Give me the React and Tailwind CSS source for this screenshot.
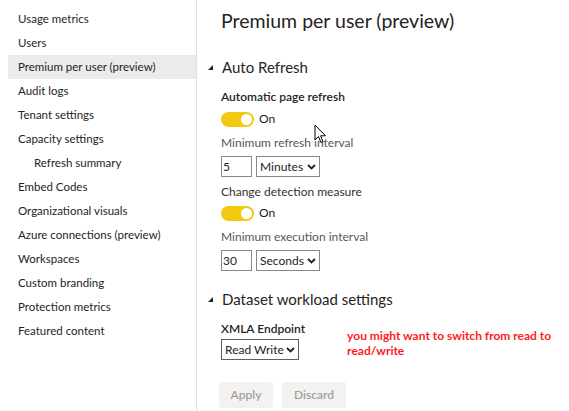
import React from "react";

const navItems = [
  { label: "Usage metrics" },
  { label: "Users" },
  { label: "Premium per user (preview)", active: true },
  { label: "Audit logs" },
  { label: "Tenant settings" },
  { label: "Capacity settings" },
  { label: "Refresh summary", sub: true },
  { label: "Embed Codes" },
  { label: "Organizational visuals" },
  { label: "Azure connections (preview)" },
  { label: "Workspaces" },
  { label: "Custom branding" },
  { label: "Protection metrics" },
  { label: "Featured content" },
];

function Chevron() {
  return (
    <svg width="9" height="6" viewBox="0 0 9 6" className="ml-auto">
      <path d="M1 1 L4.5 4.5 L8 1" fill="none" stroke="#252423" strokeWidth="1.9" />
    </svg>
  );
}

function Caret() {
  return (
    <svg width="5" height="5" viewBox="0 0 5 5" className="mr-[9px]">
      <path d="M5 0 L5 5 L0 5 Z" fill="#252423" />
    </svg>
  );
}

function Toggle() {
  return (
    <div className="flex items-center h-[16px]">
      <div className="w-[33px] h-[15px] rounded-full bg-[#f2c811] flex items-center justify-end pr-[2px]">
        <div className="w-[11px] h-[11px] rounded-full bg-white" />
      </div>
      <span className="ml-[5px] text-[12px] text-[#252423]">On</span>
    </div>
  );
}

function NumSelect({ num, unit }) {
  return (
    <div className="flex gap-[4px] h-[21px]">
      <div className="w-[31px] border border-[#8a8886] flex items-center pl-[1px] text-[12px] text-[#252423]">
        {num}
      </div>
      <div className="w-[64px] border border-[#8a8886] flex items-center pl-[3px] pr-[3px] text-[12px] text-[#252423]">
        {unit}
        <Chevron />
      </div>
    </div>
  );
}

export default function App() {
  return (
    <div
      className="w-[569px] h-[411px] bg-white flex overflow-hidden relative"
      style={{ fontFamily: "Lato, 'Noto Sans', sans-serif" }}
    >
      <div className="w-[197px] shrink-0 border-r border-[#e1dfdd] pt-[7px]">
        {navItems.map((it) => (
          <div
            key={it.label}
            className={`ml-[8px] h-[24px] flex items-center text-[11.5px] text-[#252423] ${
              it.sub ? "pl-[26px]" : "pl-[10px]"
            } ${it.active ? "bg-[#ebebeb]" : ""}`}
          >
            {it.label}
          </div>
        ))}
      </div>

      <div className="flex-1 pl-[24px] pt-[8px]">
        <div className="text-[19.5px] leading-[26px] text-[#252423]">Premium per user (preview)</div>

        <div className="flex items-center -ml-[13px] mt-[22px] h-[22px]">
          <Caret />
          <span className="text-[15px] text-[#252423]">Auto Refresh</span>
        </div>

        <div className="mt-[11px] text-[12px] leading-[16px] font-semibold text-[#252423]">
          Automatic page refresh
        </div>
        <div className="mt-[6px]">
          <Toggle />
        </div>
        <div className="mt-[8px] text-[12px] leading-[16px] text-[#535760]">Minimum refresh interval</div>
        <div className="mt-[5px]">
          <NumSelect num="5" unit="Minutes" />
        </div>
        <div className="mt-[7px] text-[12px] leading-[16px] text-[#323130]">Change detection measure</div>
        <div className="mt-[5px]">
          <Toggle />
        </div>
        <div className="mt-[8px] text-[12px] leading-[16px] text-[#535760]">Minimum execution interval</div>
        <div className="mt-[5px]">
          <NumSelect num="30" unit="Seconds" />
        </div>

        <div className="flex items-center -ml-[13px] mt-[17px] h-[22px]">
          <Caret />
          <span className="text-[15px] text-[#252423]">Dataset workload settings</span>
        </div>

        <div className="flex mt-[11px]">
          <div>
            <div className="text-[12px] leading-[16px] font-semibold text-[#252423]">XMLA Endpoint</div>
            <div className="mt-[2px] w-[78px] h-[21px] border border-[#605e5c] flex items-center pl-[3px] pr-[3px] text-[12px] text-[#252423]">
              Read Write
              <Chevron />
            </div>
          </div>
          <div className="ml-[42px] mt-[7px] text-[12px] leading-[15px] font-bold text-[#ff1a1a]">
            you might want to switch from read to
            <br />
            read/write
          </div>
        </div>

        <div className="flex gap-[9px] mt-[22px] -ml-[2px]">
          <div className="w-[54px] h-[26px] bg-[#f3f2f1] rounded-[2px] flex items-center justify-center text-[12px] font-semibold text-[#a19f9d]">
            Apply
          </div>
          <div className="w-[64px] h-[26px] bg-[#f3f2f1] rounded-[2px] flex items-center justify-center text-[12px] font-semibold text-[#a19f9d]">
            Discard
          </div>
        </div>
      </div>

      <svg
        className="absolute left-[314px] top-[124px]"
        width="13"
        height="20"
        viewBox="0 0 13 20"
      >
        <path
          d="M1 1 L1 16 L4.5 12.5 L7 18.5 L9 17.6 L6.6 11.8 L11.5 11.8 Z"
          fill="white"
          stroke="black"
          strokeWidth="1"
          strokeLinejoin="round"
        />
      </svg>
    </div>
  );
}
